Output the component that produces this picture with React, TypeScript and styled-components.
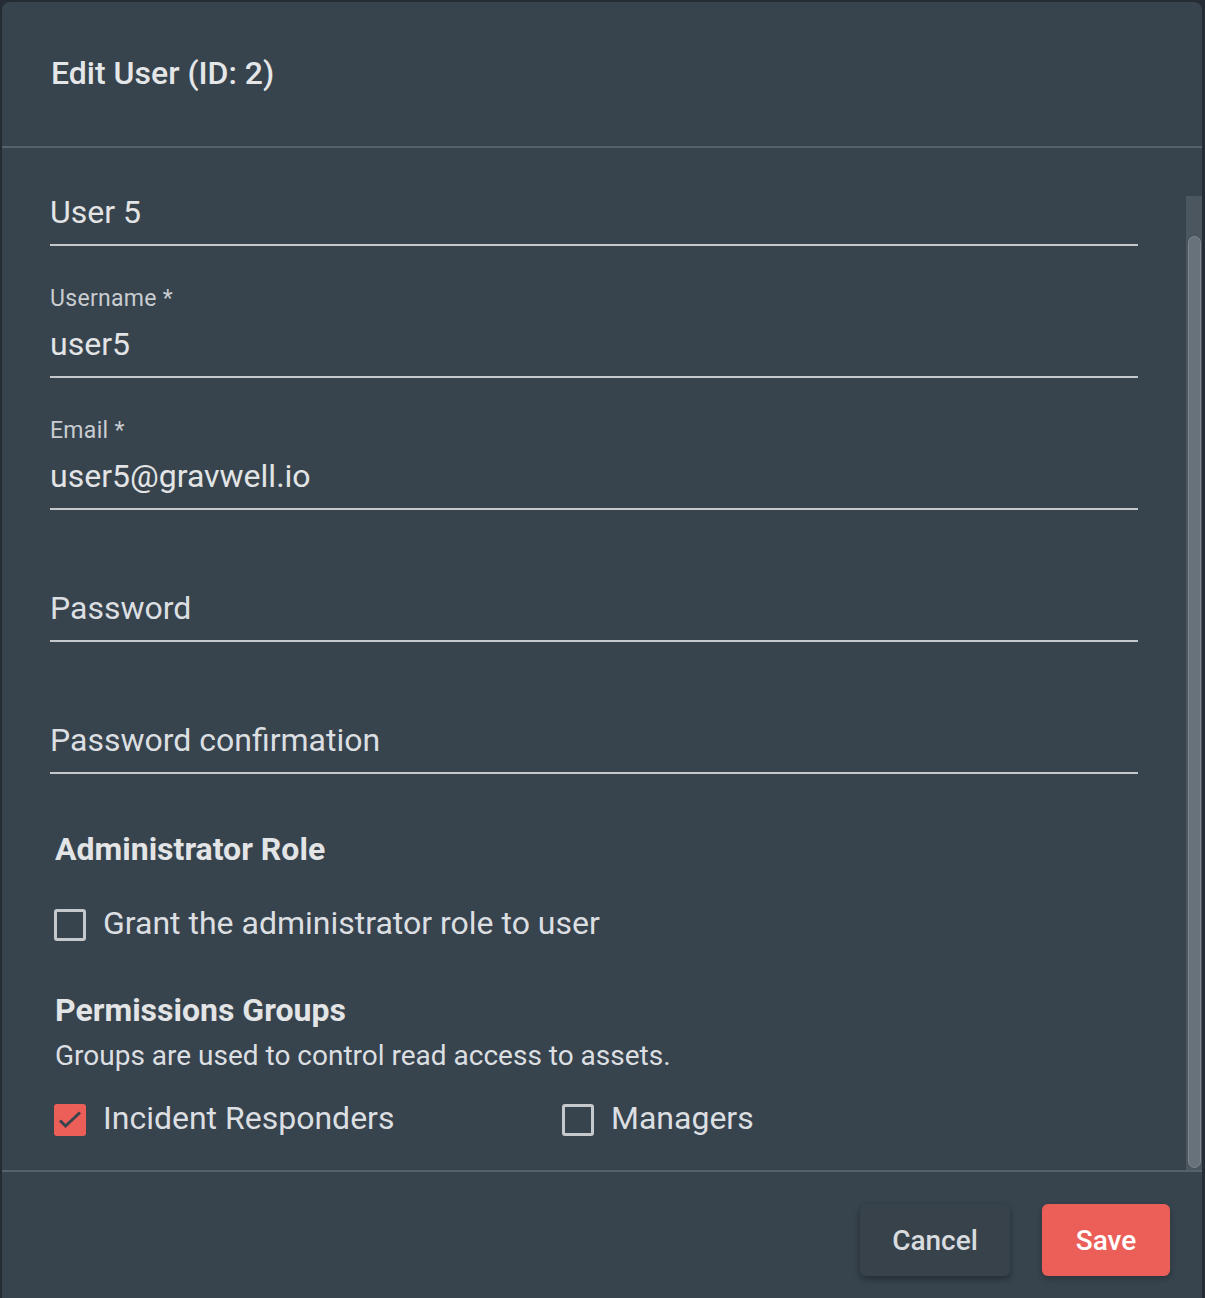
import React from 'react';
import styled, { createGlobalStyle } from 'styled-components';

const GlobalStyle = createGlobalStyle`
  html, body {
    margin: 0;
    padding: 0;
    background: #252c33;
    overflow: hidden;
  }
  * {
    box-sizing: border-box;
  }
`;

const Dialog = styled.div`
  margin: 2px 3px 0 2px;
  height: 1320px;
  background: #37434d;
  border-radius: 8px 8px 0 0;
  display: flex;
  flex-direction: column;
  font-family: Roboto, 'Liberation Sans', sans-serif;
  color: #e2e4e6;
`;

const Header = styled.div`
  height: 146px;
  display: flex;
  align-items: center;
  padding: 0 0 2px 49px;
  border-bottom: 2px solid #56626b;
`;

const Title = styled.h2`
  margin: 0;
  font-size: 32px;
  font-weight: 500;
  line-height: 36px;
  color: #e4e6e8;
`;

const Body = styled.div`
  height: 1024px;
  display: flex;
  border-bottom: 2px solid #56626b;
`;

const Form = styled.div`
  flex: 1;
  padding: 0 48px;
  display: flex;
  flex-direction: column;
`;

const Track = styled.div`
  width: 16px;
  margin-top: 48px;
  background: #4c565f;
  display: flex;
  flex-direction: column;
  padding: 40px 1px 2px 1.5px;
`;

const Thumb = styled.div`
  flex: 1;
  border-radius: 7px;
  background: #68727a;
  border: 1px solid #7d868d;
`;

const Field = styled.div<{ $h: number }>`
  height: ${(p) => p.$h}px;
  display: flex;
  flex-direction: column;
  justify-content: flex-end;
`;

const Label = styled.label`
  font-size: 23px;
  line-height: 24px;
  letter-spacing: 0.3px;
  color: #c9cdd1;
  margin-bottom: 15px;
`;

const Value = styled.div<{ $muted?: boolean }>`
  font-size: 32px;
  line-height: 36px;
  padding-bottom: 14px;
  color: ${(p) => (p.$muted ? '#dcdfe2' : '#e2e4e6')};
  border-bottom: 2px solid #c5c9cc;
`;

const SectionTitle = styled.h3<{ $top: number }>`
  margin: ${(p) => p.$top}px 0 0 5px;
  font-size: 32px;
  font-weight: 700;
  line-height: 34px;
  color: #e2e4e6;
`;

const Description = styled.p`
  margin: 13px 0 0 5px;
  font-size: 28px;
  line-height: 32px;
  color: #dcdfe2;
`;

const CheckRow = styled.div<{ $top: number }>`
  margin-top: ${(p) => p.$top}px;
  margin-left: 4px;
  display: flex;
`;

const CheckItem = styled.label`
  min-width: 508px;
  display: flex;
  align-items: center;
  gap: 17px;
  height: 40px;
  font-size: 32px;
  white-space: nowrap;
  color: #dcdfe2;
`;

const CheckText = styled.span`
  padding-bottom: 4px;
`;

const Box = styled.span<{ $checked?: boolean }>`
  width: 32px;
  height: 32px;
  border-radius: 3px;
  flex-shrink: 0;
  display: flex;
  border: ${(p) => (p.$checked ? 'none' : '3px solid #c5c9cc')};
  background: ${(p) => (p.$checked ? '#ec5f59' : 'transparent')};
`;

const Footer = styled.div`
  display: flex;
  justify-content: flex-end;
  gap: 32px;
  padding: 32px 32px 0 0;
`;

const Button = styled.button<{ $primary?: boolean }>`
  height: 72px;
  padding: 0 ${(p) => (p.$primary ? 33 : 32)}px;
  border: none;
  border-radius: 6px;
  font-family: Roboto, 'Liberation Sans', sans-serif;
  font-size: 28px;
  font-weight: 500;
  color: ${(p) => (p.$primary ? '#ffffff' : '#d9dcdf')};
  background: ${(p) => (p.$primary ? '#ec5f59' : '#37424b')};
  box-shadow: 0 3px 6px rgba(0, 0, 0, ${(p) => (p.$primary ? 0.2 : 0.35)});
  min-width: ${(p) => (p.$primary ? 128 : 150)}px;
`;

const Checkbox: React.FC<{ checked?: boolean; label: string }> = ({ checked, label }) => (
  <CheckItem>
    <Box $checked={checked}>
      {checked && (
        <svg width="32" height="32" viewBox="0 0 32 32">
          <path d="M6 16.5 L11.5 22 L26 8.5" fill="none" stroke="#37434d" strokeWidth="3" />
        </svg>
      )}
    </Box>
    <CheckText>{label}</CheckText>
  </CheckItem>
);

export default function App() {
  return (
    <>
      <GlobalStyle />
      <Dialog>
        <Header>
          <Title>Edit User (ID: 2)</Title>
        </Header>
        <Body>
          <Form>
            <Field $h={98}>
              <Value>User 5</Value>
            </Field>
            <Field $h={132}>
              <Label>Username *</Label>
              <Value>user5</Value>
            </Field>
            <Field $h={132}>
              <Label>Email *</Label>
              <Value>user5@gravwell.io</Value>
            </Field>
            <Field $h={132}>
              <Value $muted>Password</Value>
            </Field>
            <Field $h={132}>
              <Value $muted>Password confirmation</Value>
            </Field>
            <SectionTitle $top={58}>Administrator Role</SectionTitle>
            <CheckRow $top={39}>
              <Checkbox label="Grant the administrator role to user" />
            </CheckRow>
            <SectionTitle $top={48}>Permissions Groups</SectionTitle>
            <Description>Groups are used to control read access to assets.</Description>
            <CheckRow $top={28}>
              <Checkbox checked label="Incident Responders" />
              <Checkbox label="Managers" />
            </CheckRow>
          </Form>
          <Track>
            <Thumb />
          </Track>
        </Body>
        <Footer>
          <Button>Cancel</Button>
          <Button $primary>Save</Button>
        </Footer>
      </Dialog>
    </>
  );
}
